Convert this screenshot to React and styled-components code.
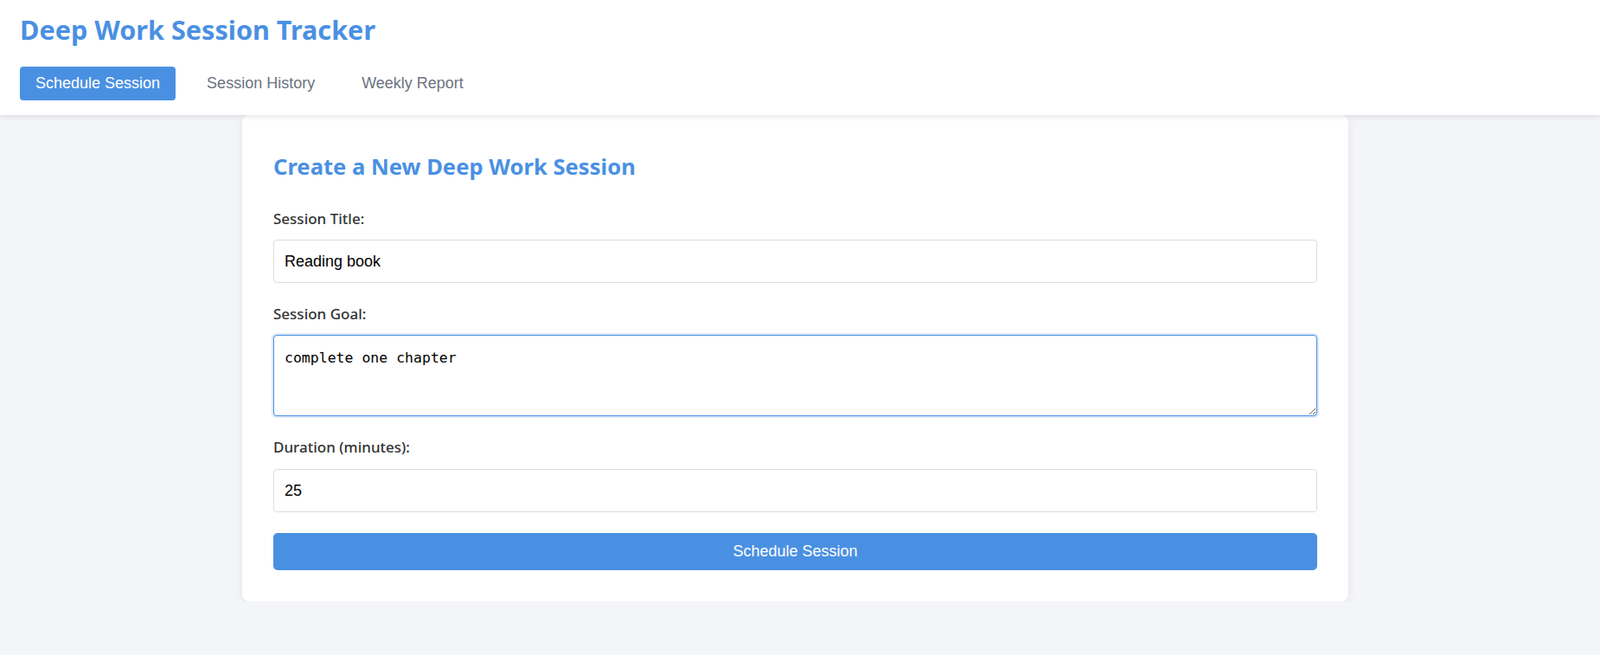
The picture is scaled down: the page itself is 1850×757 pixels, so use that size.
import { useState } from "react";
import styled, { createGlobalStyle } from "styled-components";

const GlobalStyle = createGlobalStyle`
  * {
    box-sizing: border-box;
  }
  body {
    margin: 0;
    background: #f4f5f9;
    font-family: "Noto Sans", "Open Sans", sans-serif;
  }
`;

const Header = styled.header`
  position: relative;
  z-index: 1;
  background: #fff;
  padding: 16px 23px 17px;
  box-shadow: 0 2px 6px rgba(0, 0, 0, 0.1);
`;

const Title = styled.h1`
  margin: 0;
  font-size: 30.6px;
  line-height: 36px;
  font-weight: 700;
  color: #4a90e2;
`;

const Nav = styled.nav`
  display: flex;
  gap: 18px;
  margin-top: 25px;
`;

const NavButton = styled.button`
  font-family: "Liberation Sans", Arial, sans-serif;
  font-size: 18px;
  line-height: 21px;
  padding: 9px 18px;
  border: none;
  border-radius: 4px;
  cursor: pointer;
  background: ${(p) => (p.$active ? "#4a90e2" : "transparent")};
  color: ${(p) => (p.$active ? "#fff" : "#6b7280")};
`;

const Main = styled.main`
  display: flex;
  justify-content: center;
  padding-right: 11px;
`;

const Card = styled.section`
  width: 100%;
  max-width: 1279px;
  background: #fff;
  border-radius: 8px;
  padding: 36px 36px 36px;
  box-shadow: 0 2px 10px rgba(0, 0, 0, 0.08);
`;

const CardTitle = styled.h2`
  margin: 8px 0 32px;
  font-size: 25.6px;
  line-height: 32px;
  font-weight: 700;
  color: #4a90e2;
`;

const Group = styled.div`
  margin-bottom: 24px;
`;

const Label = styled.label`
  display: block;
  font-size: 17px;
  line-height: 24px;
  font-weight: 500;
  color: #333;
  margin-bottom: ${(p) => (p.$tight ? "13px" : "12px")};
`;

const Input = styled.input`
  display: block;
  width: 100%;
  font-family: "Liberation Sans", Arial, sans-serif;
  font-size: 18px;
  line-height: 20px;
  padding: 14px 12px;
  border: 1px solid #ddd;
  border-radius: 4px;
  color: #000;
  outline: none;
`;

const TextArea = styled.textarea`
  display: block;
  width: 100%;
  height: 94px;
  margin-bottom: 3px;
  font-family: "DejaVu Sans Mono", "Liberation Mono", monospace;
  font-size: 16.5px;
  line-height: 20px;
  padding: 16px 12px 12px;
  border: 1px solid #4a90e2;
  border-radius: 4px;
  box-shadow: 0 0 0 2px rgba(74, 144, 226, 0.2);
  color: #000;
  outline: none;
`;

const Submit = styled.button`
  display: block;
  width: 100%;
  height: 43px;
  font-family: "Liberation Sans", Arial, sans-serif;
  font-size: 18px;
  border: none;
  border-radius: 5px;
  background: #4a90e2;
  color: #fff;
  cursor: pointer;
`;

const tabs = ["Schedule Session", "Session History", "Weekly Report"];

export default function App() {
  const [tab, setTab] = useState(0);
  const [title, setTitle] = useState("Reading book");
  const [goal, setGoal] = useState("complete one chapter");
  const [duration, setDuration] = useState("25");

  return (
    <>
      <GlobalStyle />
      <Header>
        <Title>Deep Work Session Tracker</Title>
        <Nav>
          {tabs.map((t, i) => (
            <NavButton key={t} $active={i === tab} onClick={() => setTab(i)}>
              {t}
            </NavButton>
          ))}
        </Nav>
      </Header>
      <Main>
        <Card>
          <CardTitle>Create a New Deep Work Session</CardTitle>
          <Group>
            <Label>Session Title:</Label>
            <Input value={title} onChange={(e) => setTitle(e.target.value)} />
          </Group>
          <Group>
            <Label>Session Goal:</Label>
            <TextArea value={goal} onChange={(e) => setGoal(e.target.value)} />
          </Group>
          <Group>
            <Label $tight>Duration (minutes):</Label>
            <Input
              type="number"
              value={duration}
              onChange={(e) => setDuration(e.target.value)}
            />
          </Group>
          <Submit>Schedule Session</Submit>
        </Card>
      </Main>
    </>
  );
}
